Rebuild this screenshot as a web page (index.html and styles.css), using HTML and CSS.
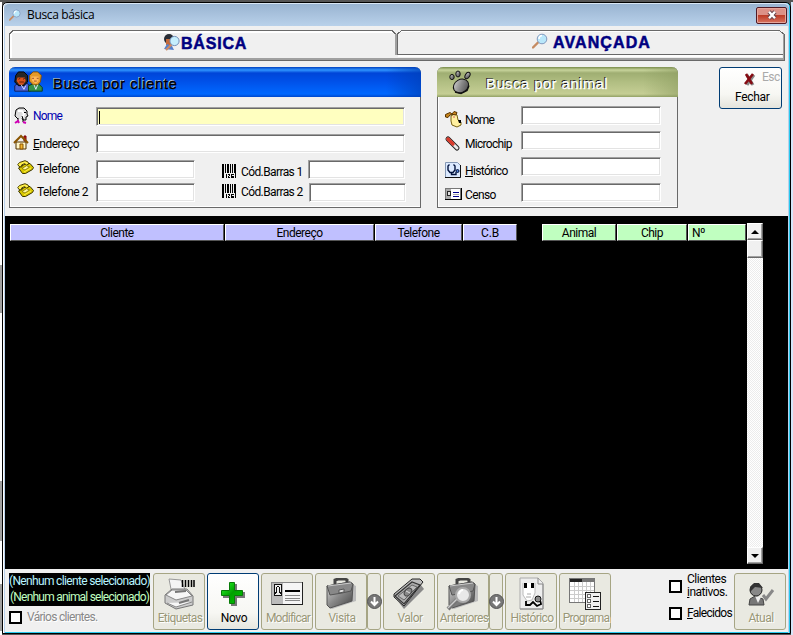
FILE: index.html
```html
<!DOCTYPE html>
<html lang="pt">
<head>
<meta charset="utf-8">
<title>Busca básica</title>
<link rel="stylesheet" href="styles.css">
</head>
<body>
<svg width="0" height="0" class="defs">
  <defs>
    <linearGradient id="gm" x2="1" y2="1"><stop stop-color="#ddd"/><stop offset=".5" stop-color="#888"/><stop offset="1" stop-color="#444"/></linearGradient>
    <linearGradient id="gg" x2="1" y2="1"><stop stop-color="#2cff2c"/><stop offset=".5" stop-color="#00a000"/><stop offset="1" stop-color="#00c800"/></linearGradient>
    <symbol id="lens" viewBox="0 0 16 16"><path d="M1 14.5 6 9.5" stroke="#c58b62" stroke-width="2.4" stroke-linecap="round"/><circle cx="10" cy="6" r="4.8" fill="#b9e7fa" stroke="#8298bd"/><path d="M7 6q0-3 3-3.400" stroke="#fff" fill="none" stroke-width="1.500"/></symbol>
    <symbol id="phone" viewBox="0 0 17 14"><path d="M1.500 8 9 3.500h4l3.500 4-1 2-7 4h-3z" fill="#d9c800" stroke="#3b3400"/><path d="M2 6.500.8 4.500 2.500 2.500 8 .7l3 1.300.8 2-2.300 1L7.500 3.600 4.500 5l.5 2z" fill="#fff04a" stroke="#4c4300"/><path d="m5 8.500 4.500-2.800 3 1.300-4.500 3z" fill="#fff8a0" stroke="#817400" stroke-width=".8"/><path d="m7 12 7-4" stroke="#fff04a"/></symbol>
    <symbol id="bars" viewBox="0 0 14 14"><path d="M0 0h2v14H0zM3 0h1v9H3zM5 0h2v9H5zM8 0h1v9H8zM10 0h1v9h-1zM12 0h2v9h-2zM13 9h1v5h-1zM4 10h1v4H4zM6 10h2v2H7v1h1v1H6v-2h1v-1H6zM9 10h3v1h-2v1h2v2H9z" shape-rendering="crispEdges"/></symbol>
    <symbol id="down" viewBox="0 0 15 15"><circle cx="7.500" cy="7.500" r="7" fill="#777" stroke="#555"/><path d="M7.500 3v8M4 7.500l3.500 3.500L11 7.500" stroke="#fff" stroke-width="2" fill="none"/></symbol>
    <symbol id="case" viewBox="0 0 32 32"><path d="m27 6 4 2v15L7 31l-3-1z" fill="#bbb"/><path d="M10 6V2l3-1h7l2 1v4" fill="none" stroke="#444" stroke-width="3"/><path d="M2 8 25 4l3 2-1 17L5 30 2 27z" fill="url(#gm)" stroke="#555"/><path d="M2 8 25 4l3 2-2 7-9 2-12 2z" fill="#888" stroke="#555"/><path d="m3 8 23-3" stroke="#ccc"/><path d="m14 12 5-1v3l-5 1z" fill="#ddd" stroke="#555"/></symbol>
  </defs>
</svg>
<main class="window">
  <header class="titlebar">
    <svg class="title-icon"><use href="#lens"/></svg>
    <span class="title">Busca básica</span>
    <button class="close" aria-label="X"><svg width="10" height="8"><path d="m2 .8 6 6.400M8 .8 2 7.200" stroke="#65434b" stroke-width="4.200"/><path d="m2 .8 6 6.400M8 .8 2 7.200" stroke="#fff" stroke-width="2.400"/></svg></button>
  </header>

  <section class="search">
    <nav class="tabs">
      <svg class="tab-frame" width="776" height="31" shape-rendering="crispEdges" fill="none">
        <path d="M1.500 28V4L4 1.500h380" stroke="#fff" stroke-width="2"/>
        <path d="M.5 29V4L4 .5h379l4 4M388.500 25V4l4-3.500h378l4.500 4V25" stroke="#696969"/>
        <path d="M386.500 4v21" stroke="#a0a0a0" stroke-width="2"/><path d="M388.500 4v21M388 24.500h386" stroke="#696969"/>
        <path d="M392 1.500h377M389 26.500h384" stroke="#fff" stroke-width="1"/><path d="M389 26h384" stroke="#fff" stroke-width="2"/>
        <path d="M1 29h774" stroke="#a0a0a0" stroke-width="2"/><path d="M0 30.500h776M775.500 4v26" stroke="#696969"/><path d="M774 4v26" stroke="#a0a0a0" stroke-width="1"/>
      </svg>
      <div class="tab tab-basic"><svg width="17" height="17"><circle cx="6" cy="5" r="5" fill="#292d35"/><path d="M3 5h6v6H3z" fill="#c56b3b"/><path d="m1 15 3-5 5 2 2 4z" fill="#5380cc"/><path d="m3 16 6-6" stroke="#d08a62" stroke-width="2.200"/><circle cx="11.500" cy="7" r="4.600" fill="#c5effd" stroke="#718db8"/></svg><span>BÁSICA</span></div>
      <div class="tab tab-adv"><svg width="16" height="16"><use href="#lens"/></svg><span>AVANÇADA</span></div>
    </nav>

    <div class="panels">
      <section class="panel client">
        <h2 class="panel-head"><svg width="31" height="22" viewBox="0 0 32 24"><path d="M1 22v-6l4-3h9l4 4v5z" fill="#4a62d6" stroke="#101a51"/><path d="M2 5 5 1h6l4 4v7l-4 4H5l-4-4z" fill="#262626" stroke="#000"/><path d="M4 7h8l1 4-3 4H6l-3-4z" fill="#d9531c"/><path d="m5 9 2-1m3 1 2-1M6 12h5" stroke="#5a1800"/><path d="M16 22v-6l5-2h6l4 4v4z" fill="#35924a" stroke="#073919"/><path d="M17 5l4-4h5l4 4-1 7-3 3h-5l-4-4z" fill="#e59a29" stroke="#865000"/><path d="M19 6h8v5l-3 3-4-3z" fill="#ffb95c"/><path d="M20 8h2m3 0h2m-5 3h3" stroke="#994b26"/><path d="m8 15 3 5 2-4m9-1 2 5 2-5" stroke="#e8e8ff" fill="none"/></svg><span>Busca por cliente</span></h2>
        <div class="fields client-fields">
          <svg width="14" height="17"><path d="m4 12-3-3 1-6 3-2h5l3 3v3l1 2-2 1v3H9l-1-2" fill="#ddd" stroke="#000"/><path d="M4 4h4l2 3-2 4" fill="none" stroke="#fff" stroke-width="2"/><path d="M10 5.500h2M8 9l1 3v3M4 11v3" stroke="#000" fill="none"/><path d="m1 16 3-2 1 2m4-1 3 1" stroke="#d000b5" stroke-width="2" fill="none"/></svg><label class="blue">Nome</label><div class="input wide focus"><i></i></div>
          <svg width="14" height="15"><path d="M2 7h10v7H2z" fill="#fff6c8" stroke="#513000"/><path d="M10 1h2v5h-2z" fill="#c22" stroke="#700"/><path d="M0 8 7 1l7 7" stroke="#8a5500" stroke-width="2" fill="none"/><path d="M6 9h3v5H6z" fill="#f2b32b" stroke="#8a5300"/></svg><label class="ender"><u>E</u>ndereço</label><div class="input wide"></div>
          <svg width="17" height="14" class="in3"><use href="#phone"/></svg><label class="in4">Telefone</label><div class="input"></div><svg width="14" height="14" class="bar1"><use href="#bars"/></svg><label class="cod1">Cód.Barras 1</label><div class="input code"></div>
          <svg width="17" height="14" class="in3"><use href="#phone"/></svg><label class="in4">Telefone 2</label><div class="input"></div><svg width="14" height="14" class="bar2"><use href="#bars"/></svg><label class="cod2">Cód.Barras 2</label><div class="input code shift"></div>
        </div>
      </section>

      <section class="panel animal">
        <h2 class="panel-head"><svg width="22" height="23"><g stroke="#111" fill="url(#gm)"><ellipse cx="12" cy="15" rx="8" ry="6.500" transform="rotate(-30 12 15)"/><ellipse cx="3" cy="6" rx="2.200" ry="2.600"/><ellipse cx="9" cy="3" rx="2.200" ry="3"/><ellipse cx="18.500" cy="4.500" rx="2.200" ry="3.500" transform="rotate(30 18.500 4.500)"/></g><path d="m6 21 6 1.500 6-3 2-5" stroke="#111" fill="none" stroke-width="1.500"/></svg><span>Busca por animal</span></h2>
        <div class="fields animal-fields">
          <svg width="17" height="16"><path d="m6 5 3-2 3 1 1 5 3 2v3l-4 2-5-2-1-4z" fill="#fff0a0" stroke="#766010"/><path d="M.5 6V3.500L5 1.500 7 3l2-2.500 3 1L11 4 8 3.500 5 4 3 6.500z" fill="#c8861d" stroke="#563100"/><path d="M13 9h3v3h-2z"/><path d="M9 5v2"  stroke="#d66"/></svg><label class="a1">Nome</label><div class="input"></div>
          <svg width="16" height="14" class="a2"><path d="m3 3 9 9" stroke="#222" stroke-width="5" stroke-linecap="round"/><path d="m3 3 9 9" stroke="#e8e8e8" stroke-width="3" stroke-linecap="round"/><path d="m3 3 5 5" stroke="#d93a2b" stroke-width="3.400" stroke-linecap="round"/></svg><label class="a2l">Microchip</label><div class="input"></div>
          <svg width="17" height="16" class="a3"><path d="M.5.5h12l3 3v12H.5z" fill="#dceaff" stroke="#8497b4"/><path d="M15.500 3v12.500H0" fill="none" stroke="#111"/><path d="M4.500 2.500 3 4v4l2 2.500h3L10 8V4L8.500 2.500M6.500 11v1.500H11V10" stroke="#00113c" stroke-width="1.400" fill="none"/><circle cx="12.500" cy="9" r="1.500" fill="#4677cf" stroke="#00113c"/></svg><label class="a3l"><u>H</u>istórico</label><div class="input"></div>
          <svg width="17" height="12" class="a4" shape-rendering="crispEdges"><path d="M.5.500h15v11H.5z" fill="#fff" stroke="#777"/><path d="M1 1h5v10H1z" fill="#aaa"/><path d="M2 3h3v4H2z" fill="#ddd" stroke="#222"/><path d="M8 4.500h6M8 8.500h6" stroke="#00008c"/><path d="M8 6.500h6" stroke="#aaa"/><path d="M0 11.500h16V0" fill="none" stroke="#000"/></svg><label class="a4l">Censo</label><div class="input"></div>
        </div>
      </section>

      <button class="exit"><span class="exit-row"><svg width="13" height="13"><path d="m4 2 6 10M11 2 4 12" stroke="#888" stroke-width="3"/><path d="m3 1 6 10M10 1 2 11" stroke="#850c13" stroke-width="2.600"/></svg><small>Esc</small></span><span class="exit-text">Fechar</span></button>
    </div>
  </section>

  <section class="results">
    <div class="columns clients-cols"><span>Cliente</span><span>Endereço</span><span>Telefone</span><span>C.B</span></div>
    <div class="columns animals-cols"><span>Animal</span><span>Chip</span><span>Nº</span></div>
    <div class="scroll"><b class="up"></b><b class="thumb"></b><i></i><b class="dn"></b></div>
  </section>

  <footer class="actions">
    <div class="status">
      <div class="selected"><span>(Nenhum cliente selecionado)</span><span class="sel-animal">(Nenhum animal selecionado)</span></div>
      <label class="check various"><i></i><span>Vários clientes.</span></label>
    </div>
    <div class="toolbar">
      <button><svg viewBox="0 0 32 32"><path d="M9 16 6 1l12 1 5 12" fill="#f4f4f4" stroke="#999"/><path d="m2 17 7-6 15 0 6 7v9L13 31 2 25z" fill="#ccc" stroke="#777"/><path d="m3 17 10 5 16-4-6-6H9zM4 25l9 4 16-5" fill="#f7f7f7" stroke="#888"/><path d="m12 14 11-1M16 25l10-3" stroke="#777" stroke-width="2"/><path d="M19.500 2v7m3-7v7m3-7v7m3-7v7m2.500-7v7" stroke="#000" stroke-width="1.500"/></svg><span class="w-eti">Etiquetas</span></button>
      <button class="active"><svg viewBox="0 0 32 32"><path d="M13 6h7v8h8v6h-8v8h-6v-8H6v-6h7z" fill="#777"/><path d="M12.500 4.500h5v8h8v5h-8v8h-5v-8h-8v-5h8z" fill="url(#gg)" stroke="#087b08"/></svg><span class="w-novo">Novo</span></button>
      <button><svg viewBox="0 0 32 32" shape-rendering="crispEdges"><path d="M.5 4.500h31v22H.5z" fill="#f5f5f5" stroke="#888"/><path d="M1 5h11v21H1z" fill="#bbb"/><path d="M31.500 4v22.500H1" fill="none" stroke="#222"/><path d="M3 6h7v11H3z" fill="#eee" stroke="#111"/><path d="m4 16 2-3-1-3 2-2 2 2-1 3 2 3" stroke="#111" fill="none"/><path d="M14 13h15" stroke="#000" stroke-width="2"/><path d="M14 17.500h15M14 20.500h15M14 22.500h15" stroke="#888"/></svg><span class="w-mod">Modificar</span></button>
      <button><svg viewBox="0 0 32 32"><use href="#case"/></svg><span class="w-vis">Visita</span></button>
      <button class="drop"><svg><use href="#down"/></svg></button>
      <button><svg viewBox="0 0 32 32"><path d="m4 22 20-20 7 9-20 20z" fill="#888"/><path d="m1 16 18-15h8l3 3-19 24L1 19z" fill="#bbb" stroke="#222"/><path d="m2 18 17-14 8 3-16 19z" fill="#aaa" stroke="#333" stroke-width="1.200"/><path d="m5 18 14-11 5 2-13 13z" fill="#bbb" stroke="#666"/><ellipse cx="15" cy="14" rx="3" ry="4.500" transform="rotate(42 15 14)" fill="#888" stroke="#444"/><path d="m13 13 4 2" stroke="#ddd"/></svg><span class="w-val">Valor</span></button>
      <button><svg viewBox="0 0 32 32"><use href="#case"/><path d="m1 31 9-9" stroke="#777" stroke-width="4"/><path d="m1 30 9-9" stroke="#ccc" stroke-width="1.500"/><circle cx="16" cy="17" r="7" fill="#e9e9e9" stroke="#aaa" stroke-width="2"/><path d="M12 16q1-4 4-4" stroke="#fff" stroke-width="2" fill="none"/></svg><span class="w-ant">Anteriores</span></button>
      <button class="drop"><svg><use href="#down"/></svg></button>
      <button><svg viewBox="0 0 32 32"><path d="M5 0h18l5 5v26H5z" fill="#eee" stroke="#aaa"/><path d="M23 0v6h5v25H5" fill="none" stroke="#888"/><path d="M8 5v12l4 6 5-1 3-7V5" fill="#fff" stroke="#bbb"/><path d="M9 5h3v5H9zm7 0h3v5h-3z"/><path d="M12 16h4M11 19h5" stroke="#aaa"/><path d="M11 23v4h4l3-3 4 4 4-2-1-4" stroke="#000" stroke-width="1.800" fill="none"/><circle cx="23" cy="21" r="3" fill="#888" stroke="#111"/></svg><span class="w-his">Histórico</span></button>
      <button><svg viewBox="0 0 32 32" shape-rendering="crispEdges"><path d="M.5.5h25v24H.5z" fill="#fff" stroke="#777"/><path d="M1 1h24v3H1z" fill="#777"/><path d="M1 1h12v3H1z" fill="#222"/><path d="M1 8.500h24M1 12.500h24M1 16.500h24M1 20.500h24M5.500 4v20M9.500 4v20M13.500 4v20M17.500 4v20M21.500 4v20" stroke="#ccc"/><path d="M16.500 14.500h15v17h-15z" fill="#eee" stroke="#222"/><path d="M18.500 16.500h3v3h-3zm0 5h3v3h-3zm0 5h3v3h-3z" fill="#fff" stroke="#666"/><path d="M24 18.500h6m-6 5h6m-6 5h6" stroke="#111"/></svg><span class="w-pro">Programa</span></button>
    </div>
    <div class="options">
      <label class="check"><i></i><span class="opt-cli">Clientes<br><u>i</u>nativos.</span></label>
      <label class="check"><i></i><span class="opt-fal"><u>F</u>alecidos</span></label>
    </div>
    <div class="toolbar current"><button><svg viewBox="0 0 32 32"><path d="m5 27 1-6 5-3 8 3 1 6z" fill="#777" stroke="#444"/><path d="m11 18 3 7 3-6" fill="#eee"/><circle cx="12" cy="12" r="6" fill="#888" stroke="#222"/><path d="M6 14V9l4-4h5l4 5-8-1z" fill="#333"/><path d="m19 17 3 4 7-9" stroke="#888" stroke-width="3" fill="none"/></svg><span class="w-atu">Atual</span></button></div>
  </footer>
</main>
</body>
</html>
```
FILE: styles.css
```css
* { box-sizing: border-box; }
body { margin: 0; width: 793px; height: 635px; overflow: hidden; padding: 2px 2px 1px; background: linear-gradient(#fff 263px, #a0a0a0 0 311px, #fff 0 479px, #a0a0a0 0 539px, #fff 0 582px, #a0a0a0 0 629px, #fff 0) 0 2px / 2px 100% no-repeat, linear-gradient(90deg, transparent 791px, #d7e7fa 0) 0 2px no-repeat, #555; font: 12px/14px Roboto, "Liberation Sans", sans-serif; letter-spacing: -.5px; color: #000; }
.defs { position: absolute; }
button { font: inherit; letter-spacing: inherit; padding: 0; margin: 0; }
svg { display: block; flex: none; overflow: visible; }
.window { width: 789px; height: 632px; background: #f0f0f0; border: 1px solid #000; border-radius: 5px 5px 0 0; box-shadow: inset 1px 0 #fff, inset 2px 0 #b9d1ea, inset -1px 0 #28c9ee, inset -2px 0 #b9d1ea, inset 0 -1px #28c9ee; padding: 0 2px; }
.titlebar { height: 23px; background: linear-gradient(#99b4d1, #b9d1ea); border-top: 1px solid #d9e7f5; display: flex; align-items: center; margin: 0 -1px; padding: 0 2px 0 5px; border-radius: 5px 5px 0 0; font-family: "Open Sans", sans-serif; }
.title-icon { width: 12px; height: 12px; }
.title { margin-left: 6px; letter-spacing: -.35px; font-size: 12px; }
.close { margin-left: auto; width: 31px; height: 17px; border: 1px solid #511a25; border-radius: 2px; box-shadow: inset 0 0 0 1px #e6a69b; background: linear-gradient(#dc9187 45%, #bd3c27 50%, #d87561); display: grid; place-items: center; }
.search { height: 190px; padding: 4px 4px 0; }
.tabs { position: relative; height: 31px; display: grid; grid-template-columns: 387px 389px; font: bold 16px/20px "Liberation Sans", sans-serif; color: #000080; -webkit-text-stroke: .5px #000080; }
.tab-frame { position: absolute; left: 0; top: 0; }
.tab { display: flex; }
.tab-basic { padding: 4px 0 0 154px; }
.tab-basic span { margin-left: 1px; letter-spacing: .8px; }
.tab-adv { padding: 3px 0 0 136px; }
.tab-adv span { margin-left: 5px; letter-spacing: 1.1px; }
.panels { display: flex; align-items: flex-start; padding-top: 6px; }
.panel { height: 141px; border: 1px solid #696969; border-top: 0; border-radius: 6px 6px 0 0; box-shadow: inset 1px -1px #fff; }
.client { width: 412px; margin-right: 16px; }
.animal { width: 241px; margin-right: 41px; }
.panel-head { margin: 0 -1px; height: 30px; border-radius: 6px 6px 0 0; display: flex; font: 15px/18px "Liberation Sans", sans-serif; }
.client .panel-head { padding: 4px 4px 0; background: linear-gradient(90deg, transparent calc(100% - 35px), #0040b8b0), linear-gradient(#0040c0, #3095ff 3px, #0045d8 6px, #0050e8 14px, #0068ff 27px, #0048cc); color: #000; text-shadow: -1px -1px #b4c8e4; -webkit-text-stroke: .4px #000; }
.client .panel-head span { margin: 4px 0 0 9px; letter-spacing: .55px; }
.animal .panel-head { padding: 4px 12px 0; background: linear-gradient(90deg, transparent calc(100% - 35px), #8c9c6090), linear-gradient(#788b4a, #c8d49c 3px, #9fae72 6px, #b1be82 15px, #c5ce94 27px, #92a165); color: #fff; text-shadow: -1px -1px #111; }
.animal .panel-head span { margin: 4px 0 0 15px; letter-spacing: .38px; -webkit-text-stroke: .3px #fff; }
.fields { display: grid; align-items: start; }
.client-fields { padding: 10px 0 0 5px; grid-template-rows: 27px 26px 23px 20px; grid-template-columns: 18px 63px 126px 20px 67px 97px; }
.animal-fields { padding: 9px 0 0 7px; grid-template-columns: 20px 56px 140px; grid-template-rows: 25px 26px 26px 20px; }
label { white-space: nowrap; }
.fields label { padding-top: 2px; }
.input { height: 19px; width: 99px; background: #fff; border: 1px solid; border-color: #a0a0a0 #fff #fff #a0a0a0; box-shadow: inset 1px 1px #696969, inset -1px -1px #e3e3e3; padding: 3px 2px; }
.animal-fields .input { width: 140px; }
.wide { grid-column: 3 / 7; width: 309px; }
.client-fields .code { width: 97px; margin-left: -1px; }
.client-fields .shift { margin-left: 0; }
.focus { background: #ffffc0; }
.focus i { display: block; width: 1px; height: 13px; background: #000; }
.fields .blue { color: #0000b0; padding-top: 2px; }
.fields .ender { padding-top: 3px; }
.in3 { margin-left: 2px; }
.in4 { margin-left: 4px; }
.blue, .a1 { letter-spacing: -.8px; }
.bar1 { margin-top: 4px; }
.bar2 { margin-top: 1px; }
.cod1, .cod2 { letter-spacing: -.6px; margin-left: -1px; }
.fields .cod1 { padding-top: 5px; }
.client-fields > svg:first-child { margin: 0 0 0 -1px; }
.client-fields > svg:nth-child(4) { margin: 1px 0 0 -1px; }
.animal-fields > svg { margin-top: 5px; }
.fields .a1 { padding-top: 7px; }
.fields .a2l { padding-top: 6px; letter-spacing: -.7px; }
.fields .a3l { padding-top: 7px; letter-spacing: -.65px; }
.fields .a4l { padding-top: 5px; letter-spacing: -.6px; }
.exit { width: 63px; height: 42px; border: 1px solid #003c74; border-radius: 3px; background: linear-gradient(#fff, #f7f7f3 65%, #e4e4dc); overflow: hidden; display: flex; flex-direction: column; align-items: flex-start; }
.exit-row { display: flex; padding: 5px 0 0 23px; height: 22px; }
.exit small { margin: -3px 0 0 6px; font-size: 12px; color: #aaa; }
.exit-text { margin-left: 15px; letter-spacing: -.3px; }
.results { height: 353px; background: #000; display: flex; padding: 7px 0 0 5px; }
.columns { display: flex; height: 17px; margin-top: 1px; gap: 1px; text-align: center; }
.columns span { border: 1px solid; border-color: #fff #555 #555 #fff; line-height: 16px; }
.clients-cols span { background: #c0c0ff; }
.clients-cols span:nth-child(1) { width: 214px; }
.clients-cols span:nth-child(2) { width: 149px; }
.clients-cols span:nth-child(3) { width: 87px; }
.clients-cols span:nth-child(4) { width: 54px; letter-spacing: -.2px; }
.animals-cols { margin-left: 25px; }
.animals-cols span { background: #c0ffc0; width: 74px; }
.animals-cols span:nth-child(2) { width: 70px; }
.animals-cols span:nth-child(3) { width: 58px; text-align: left; padding-left: 3px; }
.scroll { width: 16px; height: 341px; margin-left: 1px; background: repeating-conic-gradient(#fff 0 25%, #ececec 0 50%) 0 0/2px 2px; display: flex; flex-direction: column; }
.scroll b { height: 17px; background: #f0f0f0; border: 1px solid; border-color: #fff #696969 #696969 #fff; box-shadow: inset -1px -1px #a0a0a0; display: grid; place-items: center; }
.scroll i { flex: 1; }
.scroll .thumb { height: 18px; }
.up::after, .dn::after { content: ""; border: 4px solid transparent; border-top: 0; border-bottom: 4px solid #000; }
.dn::after { transform: scaleY(-1); }
.actions { height: 61px; display: flex; padding: 4px 2px 0 4px; }
.status { width: 141px; margin-right: 3px; }
.selected { height: 33px; background: #000; color: #b8f4ff; line-height: 16px; white-space: nowrap; letter-spacing: -.66px; }
.selected span { display: block; }
.selected .sel-animal { color: #c0ffc0; margin-left: 1px; letter-spacing: -.78px; }
.check { display: flex; align-items: center; }
.check i { width: 13px; height: 13px; border: 2px solid #000; background: #fff; flex: none; }
.various { margin-top: 4px; color: #888; text-shadow: 1px 1px #fff; letter-spacing: -.7px; }
.various span { margin-left: 5px; }
.toolbar { display: flex; gap: 2px; }
.toolbar button { width: 52px; height: 57px; border: 1px solid #a6a584; border-radius: 3px; background: #e9e9e1; color: #999777; text-shadow: 1px 1px #fff; display: flex; flex-direction: column; align-items: center; padding-top: 4px; white-space: nowrap; }
.toolbar svg { width: 32px; height: 32px; }
.toolbar span { margin: 1px 0 0 2px; }
.toolbar .w-mod { letter-spacing: -.75px; }
.toolbar .w-ant { letter-spacing: -.65px; }
.toolbar .w-pro { letter-spacing: -.75px; }
.toolbar .w-his, .toolbar .w-eti { letter-spacing: -.6px; }
.toolbar .w-novo { letter-spacing: -.3px; }
.toolbar .active { background: linear-gradient(#fff, #f7f7f3 70%, #e6e6df); border-color: #003c74; color: #000; text-shadow: none; }
.toolbar .drop { width: 14px; margin-left: -2px; padding-top: 20px; }
.toolbar .drop svg { width: 15px; height: 15px; }
.options { margin-left: 58px; width: 65px; display: flex; flex-direction: column; white-space: nowrap; line-height: 13px; }
.options .check { gap: 5px; }
.options .check + .check { margin-top: 8px; }
.opt-fal { letter-spacing: -.7px; }
```
